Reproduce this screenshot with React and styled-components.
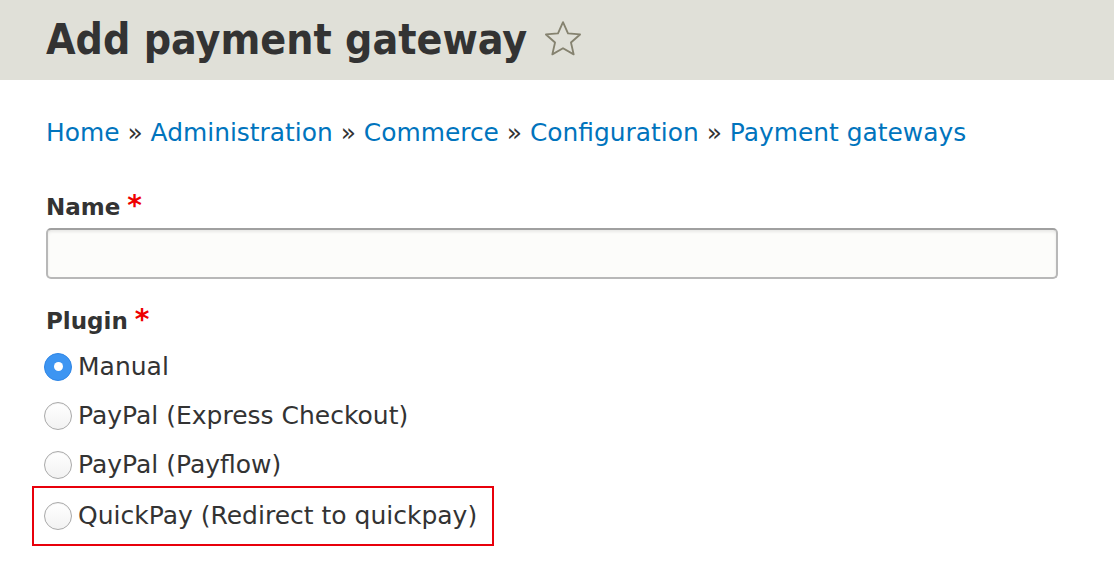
import React from "react";
import styled, { createGlobalStyle } from "styled-components";

const GlobalStyle = createGlobalStyle`
  html, body {
    margin: 0;
    padding: 0;
    background: #fff;
  }
  body {
    font-family: "DejaVu Sans", "Liberation Sans", sans-serif;
    color: #333;
  }
`;

const crumbs = [
  "Home",
  "Administration",
  "Commerce",
  "Configuration",
  "Payment gateways",
];

const plugins = [
  { label: "Manual", checked: true },
  { label: "PayPal (Express Checkout)" },
  { label: "PayPal (Payflow)" },
  { label: "QuickPay (Redirect to quickpay)", highlight: true },
];

export default function App() {
  return (
    <>
      <GlobalStyle />
      <Header>
        <Title>Add payment gateway</Title>
        <Star viewBox="0 0 24 24">
          <path d="M12 2.4l2.85 6.35 6.9.65-5.2 4.6 1.55 6.8L12 17.25 5.9 20.8l1.55-6.8-5.2-4.6 6.9-.65z" />
        </Star>
      </Header>
      <Content>
        <Breadcrumb>
          {crumbs.map((c, i) => (
            <React.Fragment key={c}>
              {i > 0 && <Sep> » </Sep>}
              <Crumb href="#">{c}</Crumb>
            </React.Fragment>
          ))}
        </Breadcrumb>

        <Label>
          Name<Req>*</Req>
        </Label>
        <TextInput type="text" />

        <Label top>
          Plugin<Req>*</Req>
        </Label>
        <Radios>
          {plugins.map((p) => (
            <RadioRow key={p.label} highlight={p.highlight}>
              <Radio checked={p.checked} />
              <RadioText>{p.label}</RadioText>
            </RadioRow>
          ))}
        </Radios>
      </Content>
    </>
  );
}

const Header = styled.div`
  background: #e0e0d8;
  height: 80px;
  padding: 0 46px;
  display: flex;
  align-items: center;
  gap: 15px;
`;

const Title = styled.h1`
  margin: 0;
  font-family: "DejaVu Sans Condensed", "DejaVu Sans", sans-serif;
  font-stretch: condensed;
  font-size: 42.5px;
  font-weight: 700;
  color: #333;
  line-height: 1;
`;

const Star = styled.svg`
  width: 42px;
  height: 42px;
  margin-top: -3px;
  fill: none;
  stroke: #85826f;
  stroke-width: 1.05;
  stroke-linejoin: round;
`;

const Content = styled.div`
  padding: 38px 56px 0 46px;
`;

const Breadcrumb = styled.div`
  font-size: 24.9px;
  line-height: 30px;
  margin-bottom: 44px;
`;

const Crumb = styled.a`
  color: #0074bd;
  text-decoration: none;
`;

const Sep = styled.span`
  color: #333;
`;

const Label = styled.div`
  font-size: 23px;
  font-weight: 700;
  line-height: 30px;
  margin-top: ${(p) => (p.top ? "27px" : "0")};
  margin-bottom: 6px;
`;

const Req = styled.span`
  color: #e00;
  margin-left: 7px;
  font-size: 28px;
  line-height: 0;
`;

const TextInput = styled.input`
  display: block;
  box-sizing: border-box;
  width: 100%;
  height: 51px;
  margin: 0;
  background: #fcfcfa;
  border: 2px solid #b8b8b8;
  border-top-color: #a0a0a0;
  border-radius: 5px;
  box-shadow: inset 0 2px 3px rgba(0, 0, 0, 0.08);
  outline: none;
`;

const Radios = styled.div`
  display: flex;
  flex-direction: column;
  margin: 2px 0 0 -2px;
`;

const RadioRow = styled.div`
  display: flex;
  align-items: center;
  gap: 6px;
  height: 49px;
  ${(p) =>
    p.highlight &&
    `
    height: 56px;
    width: fit-content;
    margin-top: -3px;
    margin-left: -12px;
    padding: 0 15px 0 10px;
    border: 2px solid #e8000b;
  `}
`;

const Radio = styled.span`
  box-sizing: border-box;
  width: 28px;
  height: 28px;
  border-radius: 50%;
  flex: none;
  position: relative;
  ${(p) =>
    p.checked
      ? `
    background: #3d95f2;
    border: 1px solid #2f86e6;
    &::after {
      content: "";
      position: absolute;
      left: 50%;
      top: 50%;
      width: 9px;
      height: 9px;
      margin: -4.5px 0 0 -4.5px;
      border-radius: 50%;
      background: #fff;
    }
  `
      : `
    background: linear-gradient(#fff, #f2f2f2);
    border: 1px solid #a9a9a9;
    box-shadow: inset 0 1px 1px rgba(0,0,0,0.05);
  `}
`;

const RadioText = styled.span`
  font-size: 25px;
  line-height: 30px;
  color: #333;
`;
